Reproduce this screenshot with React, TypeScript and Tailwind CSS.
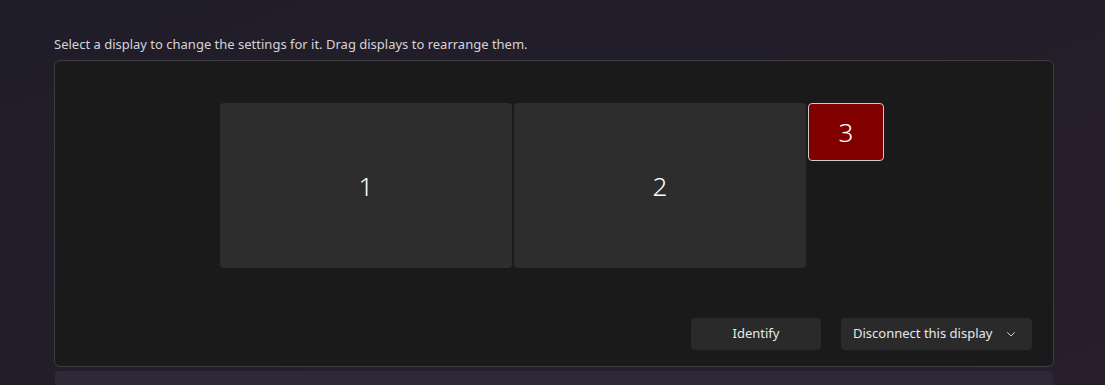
import React from "react";

export default function App() {
  const font = { fontFamily: '"Segoe UI", "Noto Sans", "Open Sans", sans-serif' };
  return (
    <div
      className="w-[1105px] h-[385px] overflow-hidden bg-gradient-to-br from-[#1f1d29] to-[#281e2c] pl-[54px] pr-[51px] pt-[34px] flex flex-col"
      style={font}
    >
      <div className="text-[13px] leading-[20px] text-[#d6d4da]">
        Select a display to change the settings for it. Drag displays to rearrange them.
      </div>
      <div className="mt-[6px] h-[307px] w-[1000px] shrink-0 rounded-[6px] border border-[#3f3e45] bg-[#1a1a1a] flex flex-col">
        <div className="flex items-start pl-[165px] pt-[42px] gap-[2px]">
          <div className="w-[292px] h-[165px] rounded-[4px] bg-[#2d2d2d] flex items-center justify-center text-white text-[26px] font-light">
            <span className="mt-[2px]">1</span>
          </div>
          <div className="w-[292px] h-[165px] rounded-[4px] bg-[#2d2d2d] flex items-center justify-center text-white text-[26px] font-light">
            <span className="mt-[2px]">2</span>
          </div>
          <div className="w-[76px] h-[58px] rounded-[4px] border border-[#cfc9c9] bg-[#800000] flex items-center justify-center text-white text-[26px] font-light">
            3
          </div>
        </div>
        <div className="mt-auto flex justify-end gap-[20px] pr-[21px] pb-[16px]">
          <div className="w-[130px] h-[32px] rounded-[4px] bg-[#2a2a2a] flex items-center justify-center text-[13px] text-[#e8e8e8]">
            Identify
          </div>
          <div className="w-[191px] h-[32px] rounded-[4px] bg-[#2a2a2a] flex items-center pl-[12px] pr-[17px] text-[13px] text-[#e8e8e8]">
            <span>Disconnect this display</span>
            <svg className="ml-auto" width="8" height="5" viewBox="0 0 8 5" fill="none">
              <path d="M0.5 0.5l3.5 3.5 3.5-3.5" stroke="#cfcfcf" strokeWidth="1" strokeLinecap="round" strokeLinejoin="round" />
            </svg>
          </div>
        </div>
      </div>
      <div className="mt-[4px] w-[998px] ml-[1px] flex-1 rounded-t-[4px] bg-[#2f2838]" />
    </div>
  );
}
